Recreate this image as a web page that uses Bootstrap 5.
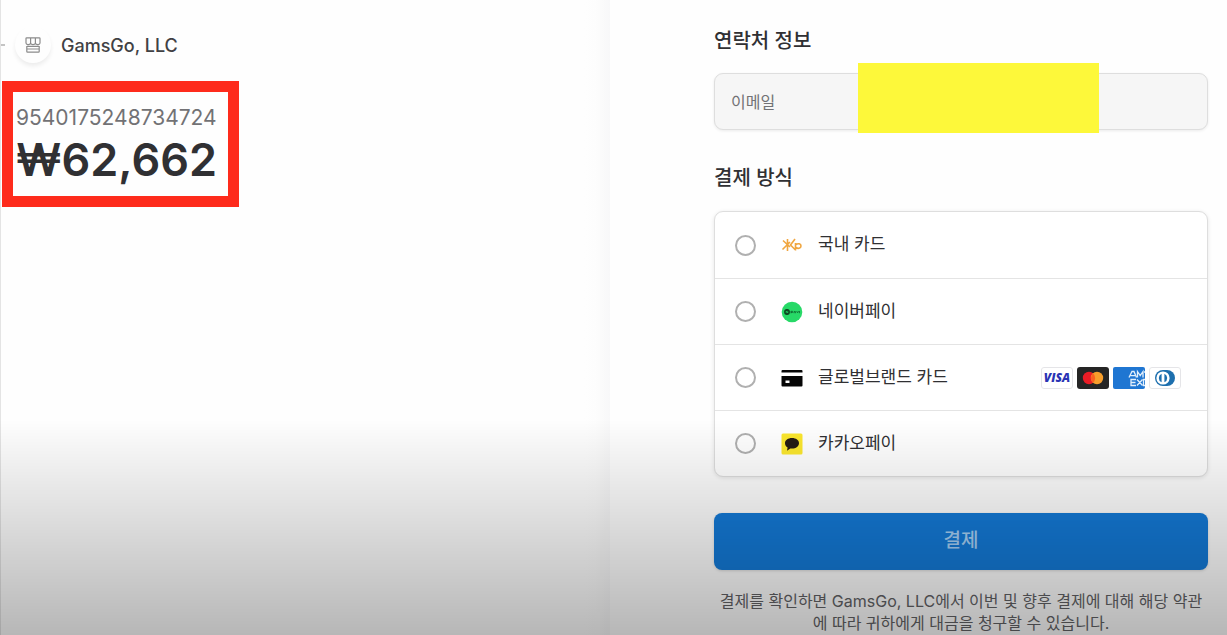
<!DOCTYPE html>
<html lang="ko">
<head>
<meta charset="utf-8">
<meta name="viewport" content="width=device-width, initial-scale=1">
<title>GamsGo, LLC 결제</title>
<link href="https://cdn.jsdelivr.net/npm/bootstrap@5.3.0/dist/css/bootstrap.min.css" rel="stylesheet">
<script src="https://cdn.jsdelivr.net/npm/bootstrap@5.3.0/dist/js/bootstrap.bundle.min.js" defer></script>
<style>
  body { font-family: Inter, "Noto Sans CJK KR", sans-serif; color: #303033; background: #fefefe; }
  .checkout { display: grid; grid-template-columns: 610fr 617fr; min-height: 100vh; }
  .summary { padding: 25px 2px 24px 0; border-left: 1px solid #e4e4e4; background: linear-gradient(to left, #f8f8f9 0, #fafafa 6px, #fdfdfd 14px, transparent 26px); }
  .merchant { gap: 10px; height: 40px; font-size: 18px; font-weight: 500; color: #414144; }
  .back-link { width: 4px; height: 2px; background: #c4c4c4; }
  .store-badge { width: 36px; height: 36px; box-shadow: 0 3px 4px rgba(0,0,0,.07); }
  .amount-box { width: 237px; margin: 16px 0 0 1px; padding: 14px 2px 6px 3px; border: 11px solid #fe2b1c; }
  .order-no { font-size: 21px; line-height: 24px; color: #727275; }
  .price { font-size: 45px; line-height: 60px; font-weight: 600; color: #303033; }
  .pay-form { padding: 26px 19px 0 104px; }
  .section-title { font-size: 20px; line-height: 30px; font-weight: 500; margin: 0; }
  .email-field { height: 57px; margin: 17px 0 33px; padding: 0 16px; border: 1px solid #dedede; border-radius: 9px; background: #f6f6f6; box-shadow: 0 1px 3px rgba(0,0,0,.08); }
  .email-field label { font-size: 16px; color: #727275; }
  .email-field input { min-width: 0; }
  .cover { top: -11px; bottom: -4px; left: 29%; right: 22%; background: #fdf83a; }
  .methods { margin: 18px 0 36px; border: 1px solid #dedede; border-radius: 9px; box-shadow: 0 1px 4px rgba(0,0,0,.1); background: #fff; }
  .method { height: 66px; padding: 0 26px 0 20px; font-size: 17px; cursor: pointer; }
  .method + .method { border-top: 1px solid #e4e4e4; }
  .method .form-check-input { width: 21px; height: 21px; margin: 0 25px 0 0; border: 2px solid #b0b0b0; }
  .method-icon { width: 22px; height: 22px; margin-right: 15px; flex: none; }
  .brand-list { gap: 4px; }
  .btn-pay { height: 57px; font-size: 19px; font-weight: 500; border: 0; border-radius: 8px; background: #147ad7; color: #a6d0f5; box-shadow: 0 1px 3px rgba(0,0,0,.15); }
  .btn-pay:hover { background: #0f6fc6; color: #fff; }
  .terms { margin: 20px 0 0; font-size: 16px; line-height: 22px; color: #626265; text-align: center; }
  .shade { height: 34vh; background: linear-gradient(rgba(0,0,0,0), rgba(0,0,0,.28)); pointer-events: none; }
</style>
</head>
<body>
<main class="checkout">
  <section class="summary">
    <div class="merchant d-flex align-items-center">
      <a class="back-link" href="#" aria-label="뒤로"></a>
      <span class="store-badge rounded-circle d-flex align-items-center justify-content-center">
        <svg width="16" height="16" viewBox="0 0 16 16" fill="none" stroke="#8b8b8b" stroke-width="1.2">
          <path d="M1.700.8h12.600q.7 0 .7.700v4.500c0 2-3.800 2.200-4.600.3-.8 1.700-4 1.700-4.800 0C4.800 8.200 1 8 1 6V1.500q0-.7.7-.7zM5.600 1v5.500M10.400 1v5.500M1.800 9v5.400q0 .8.800.8h10.800q.8 0 .8-.8V9M2 9.300h12M2 12h12"/>
        </svg>
      </span>
      <span>GamsGo, LLC</span>
    </div>
    <div class="amount-box">
      <div class="order-no">9540175248734724</div>
      <div class="price">₩62,662</div>
    </div>
  </section>

  <form class="pay-form">
    <h2 class="section-title">연락처 정보</h2>
    <div class="email-field position-relative d-flex align-items-center">
      <label for="email">이메일</label>
      <input class="flex-grow-1 border-0 bg-transparent ms-3" id="email" type="email">
      <span class="cover position-absolute"></span>
    </div>

    <h2 class="section-title">결제 방식</h2>
    <div class="methods">
      <label class="method d-flex align-items-center" for="m-domestic">
        <input class="form-check-input" type="radio" name="method" id="m-domestic">
        <svg class="method-icon" viewBox="0 0 22 22" fill="none" stroke="#f0a640" stroke-width="1.600">
          <path d="M2 6.500 9 13M1.500 15.500 9 8M6.500 5v12M14 5 9.500 11l5 5M14.500 9v7.500M15 10.500c2-1.500 5-.8 5 1.500 0 2.600-3.500 3-5 1.400"/>
        </svg>
        <span>국내 카드</span>
      </label>
      <label class="method d-flex align-items-center" for="m-naver">
        <input class="form-check-input" type="radio" name="method" id="m-naver">
        <svg class="method-icon" viewBox="0 0 22 22">
          <circle cx="11" cy="11" r="10.300" fill="#27d967"/>
          <circle cx="6" cy="11" r="2.900" fill="#0b3d1c"/>
          <path d="M5.200 12.200V9.900l1.600 2.200V9.800" stroke="#27d967" stroke-width=".7" fill="none"/>
          <path d="M10 10v2.300M10 10.300h1.500v1.200H10M13 12.200v-1.600h1.400v1.600M15.700 10.200l.8 1.600 1-1.600M18.400 10v2.200" stroke="#0f6b32" stroke-width=".9" fill="none"/>
        </svg>
        <span>네이버페이</span>
      </label>
      <label class="method d-flex align-items-center" for="m-global">
        <input class="form-check-input" type="radio" name="method" id="m-global">
        <svg class="method-icon" viewBox="0 0 22 22">
          <path d="M1.500 3h19q1 0 1 1v1.500H.500V4q0-1 1-1zM.500 9h21v9.500q0 1-1 1h-19q-1 0-1-1z" fill="#060606"/>
          <path d="M4.500 13.500h4v2.500h-4z" fill="#fff"/>
        </svg>
        <span>글로벌브랜드 카드</span>
        <span class="brand-list d-flex ms-auto">
          <svg width="32" height="22" viewBox="0 0 32 22" role="img" aria-label="Visa">
            <rect x=".5" y=".5" width="31" height="21" rx="2.500" fill="#fff" stroke="#e5e5e8"/>
            <text x="16" y="15" text-anchor="middle" font-family="Open Sans, sans-serif" font-size="12" font-weight="800" font-style="italic" fill="#2933b4">VISA</text>
          </svg>
          <svg width="32" height="22" viewBox="0 0 32 22" role="img" aria-label="Mastercard">
            <rect width="32" height="22" rx="3" fill="#252525"/>
            <circle cx="12" cy="11" r="6.200" fill="#eb1c26"/><circle cx="20" cy="11" r="6.200" fill="#f79e2b"/>
            <path d="M16 6.300a6.200 6.200 0 0 1 0 9.400 6.200 6.200 0 0 1 0-9.400z" fill="#fa6020"/>
          </svg>
          <svg width="32" height="22" viewBox="0 0 32 22" role="img" aria-label="American Express">
            <rect width="32" height="22" rx="2" fill="#1f76d2"/>
            <path d="M16 10.500 19 4.500h2l2.500 6M17.500 8.600h4.600M24.500 10.500v-6l2.700 4 2.800-4v6M31 5h1M23 12.500h-5v6h5M18 15.500h4.500M24 12.500l5.500 6M29.500 12.500l-5.500 6M32 12.500h-1.500v6H32" fill="none" stroke="#e2effb" stroke-width="1.300"/>
          </svg>
          <svg width="32" height="22" viewBox="0 0 32 22" role="img" aria-label="Diners Club">
            <rect x=".5" y=".5" width="31" height="21" rx="2.500" fill="#fff" stroke="#e5e5e8"/>
            <path d="M14 3h4a8 8 0 0 1 0 16h-4a8 8 0 0 1 0-16z" fill="#1d6fae"/>
            <circle cx="14" cy="11" r="6.600" fill="#fff"/>
            <path d="M12.600 6.700a4.700 4.700 0 0 0 0 8.600zM15.400 6.700a4.700 4.700 0 0 1 0 8.600z" fill="#1d6fae"/>
          </svg>
        </span>
      </label>
      <label class="method d-flex align-items-center" for="m-kakao">
        <input class="form-check-input" type="radio" name="method" id="m-kakao">
        <svg class="method-icon" viewBox="0 0 22 22">
          <rect x=".5" y=".5" width="21" height="21" rx="1.500" fill="#fbe72e"/>
          <path d="M11 5c4 0 7 2.200 7 5.200s-3 5.300-7 5.300q-.9 0-1.700-.1L6 17.800l.6-3.300C5 13.500 4 12 4 10.200 4 7.200 7 5 11 5z" fill="#241a14"/>
        </svg>
        <span>카카오페이</span>
      </label>
    </div>

    <button class="btn btn-pay w-100" type="submit">결제</button>
    <p class="terms">결제를 확인하면 GamsGo, LLC에서 이번 및 향후 결제에 대해 해당 약관에 따라 귀하에게 대금을 청구할 수 있습니다.</p>
  </form>
</main>
<div class="shade position-fixed bottom-0 start-0 end-0"></div>
</body>
</html>
